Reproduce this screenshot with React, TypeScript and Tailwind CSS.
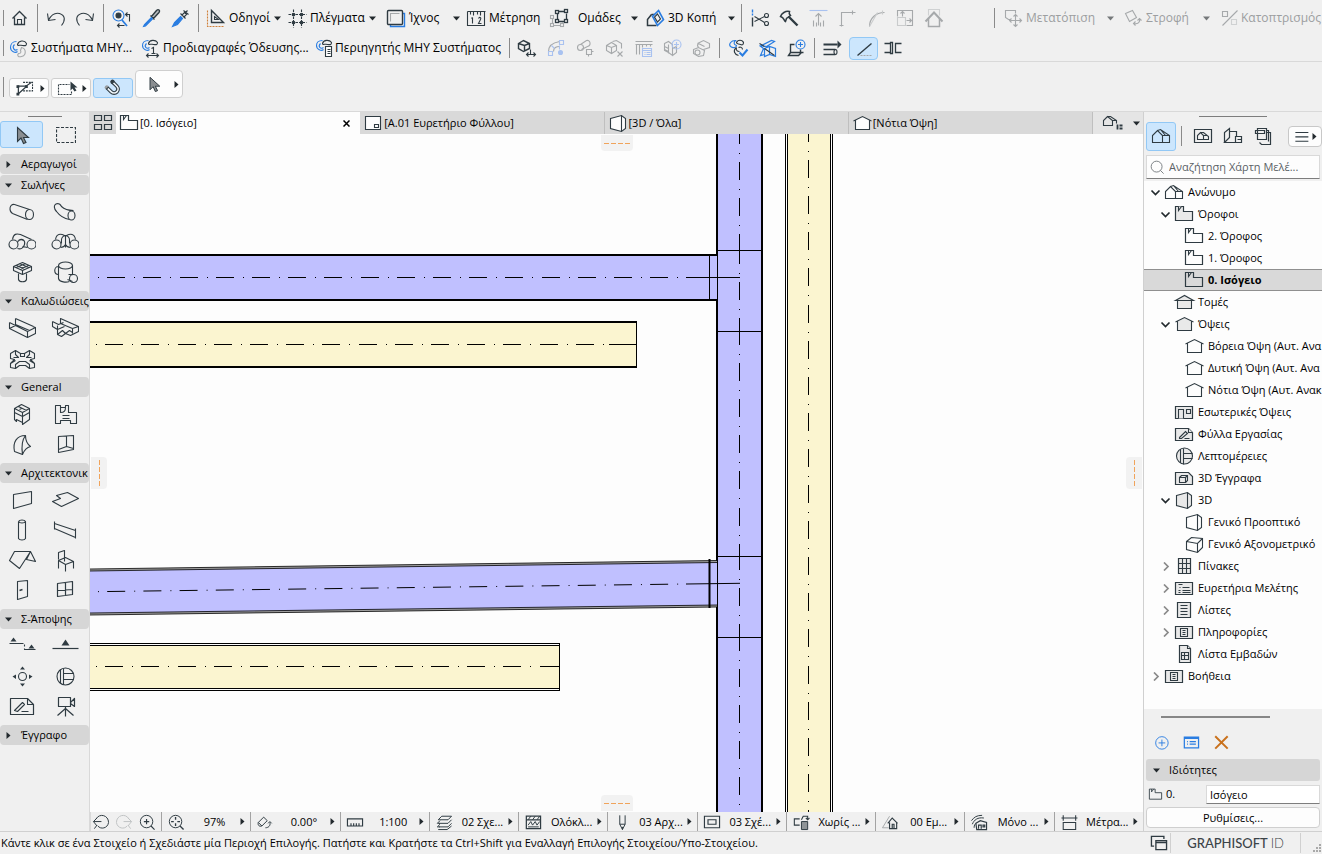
import React, { useState } from 'react';

const DARK = '#2f3b42';
const BLUE = '#2a7de1';
const PALE = '#a9c2f0';
const GRAY = '#a6a9ab';

interface IconProps {
  name: string;
  w?: number;
  h?: number;
  fill?: string;
  color?: string;
}

// Every drawing is made on an 18x18 board, the palette tools on a 28x24 one
const art: Record<string, React.ReactNode> = {
  home: <><path d="M2 9l7-7 7 7M4 8v7h10V8" strokeWidth="1.300" /><path d="M7 15v-5h4v5" /></>,
  undo: <path d="M0 4l1 7 7-1M1 10.500C4 5 8 3 12 4c6 2 6 7 2 12" />,
  redo: <path d="M17 4l-1 7-7-1M16 10.500C13 5 9 3 5 4c-6 2-6 7-2 12" />,
  findSelect: <>
    <g stroke={BLUE}><circle cx="5" cy="6" r="5.500" /><path d="M8.500 10.500l5 6" strokeWidth="1.800" /></g>
    <circle cx="5" cy="6" r="2.500" fill={DARK} /><path d="M12 5h4v7M14 3l-2 2 2 2M4 16h7M6 14l-2 2 2 2" />
  </>,
  eyedropper: <><path d="M8 6l4 4M9 7l5-6c2-2 4 0 2.500 2L11 9" fill="#b5babd" strokeWidth="1.400" /><path d="M9 8L2 15l-1 2 2-.5L10 9.500z" fill={BLUE} stroke={BLUE} /></>,
  syringe: <><path d="M9 4l5 5M14 3l2-2M12 1l5 4M10 6l3-3 2 2-3 3" /><path d="M9 7l2 2-5 6-5 2 2-4z" fill={BLUE} stroke={BLUE} /></>,
  guides: <><path d="M4 1v12h12z" strokeWidth="1.400" /><path d="M7 7v3h4z" /><path d="M0 1v16h17" stroke="#d0803a" strokeDasharray="2 1" /></>,
  grid: <><path d="M5 0v18M13 0v18M0 5h18M0 13h18" strokeDasharray="2.500 1" /><g fill={DARK}><circle cx="5" cy="5" r="1.300" /><circle cx="13" cy="5" r="1.300" /><circle cx="5" cy="13" r="1.300" /><circle cx="13" cy="13" r="1.300" /></g></>,
  trace: <><path d="M3 15v2h14V4h-2" stroke={BLUE} strokeWidth="1.400" /><rect x="0" y="1" width="15" height="14" rx="1" strokeWidth="1.400" /><path d="M3 12V4h9" stroke={GRAY} /></>,
  ruler12: <><path d="M0 2v14h17V2M0 2h18M3 2v3M6 2v4M10 2v3M13 2v4M5 8v6M4 9l1-1M11 9c1-2 3-1 2 1l-2 4h3" /></>,
  groups: <><g stroke={GRAY}><rect x="0" y="6" width="3" height="3" /><rect x="0" y="14" width="3" height="3" /><rect x="10" y="14" width="3" height="3" /><path d="M2 9v5M3 16h7M12 13v1" /></g><path d="M7 4v6M8 2h6M16 4v6M8 12h6" strokeWidth="1.300" /><g strokeWidth="1.300"><rect x="5" y="1" width="3" height="3" /><rect x="14" y="0" width="3" height="3" /><rect x="5" y="10" width="3" height="3" /><rect x="14" y="10" width="3" height="3" /></g></>,
  cut3d: <><path d="M5 5l-4 5v6h9M5 5h3" strokeWidth="1.500" /><path d="M12 1l5 9-6 6-5-9z" stroke={BLUE} strokeWidth="1.600" /><path d="M11 4.500l3 5-3 3-3-5z" /></>,
  scissors: <><path d="M1 0v6" stroke={BLUE} strokeDasharray="3 1" strokeWidth="1.400" /><path d="M1 8v9" strokeWidth="1.400" /><path d="M3 7l10 6M3 12l10-5" /><circle cx="15" cy="6" r="2" /><circle cx="15" cy="14" r="2" /></>,
  axe: <><path d="M0 7c1-3 5-6 9-5-1 2 0 3 1 4l-4 3-1 3c-2-1-1-4-5-5z" fill="#f0f0f0" strokeWidth="1.500" /><path d="M8 7l9 9" strokeWidth="2.400" /></>,
  raise: <><path d="M0 1h18" stroke={PALE} /><path d="M9 16V4M6 7l3-3 3 3M4 11v6M7 13v4M11 13v4M14 11v6" stroke={GRAY} /></>,
  corner: <path d="M3 17V3h14M1 16h4M14 1v4" stroke={GRAY} />,
  fillet: <><path d="M2 17C2 9 8 3 17 3" stroke={GRAY} /><path d="M2 17l8-14M15 1v4" stroke="#c9cbcc" /></>,
  resize: <><path d="M1 7V1h15v15h-6" stroke={GRAY} /><path d="M1 8h8v8H1z" stroke="#c9cbcc" /><path d="M6 7V2M4 4l2-2 2 2M10 11h5M13 9l2 2-2 2" stroke={GRAY} /></>,
  roof: <><path d="M3 6V0h11v6" stroke="#cfd1d2" /><path d="M0 12l8.500-9 8.500 9" stroke={GRAY} strokeWidth="2" /><path d="M3 9v8h11V9" stroke={GRAY} strokeWidth="1.500" /></>,
  move: <g stroke={GRAY}><path d="M5 10H3l-3-2V1h10v3" /><path d="M10 5v12M4 11h12M8 7l2-2 2 2M8 15l2 2 2-2M6 9l-2 2 2 2M14 9l2 2-2 2" /></g>,
  rotate: <g stroke={GRAY}><path d="M0 4l7-3 4 7-7 4z" /><path d="M8 14c4 1 7-1 6-5M12 11l2-2 2 2M10 12l-2 2 2 2" /></g>,
  mirror: <g stroke={GRAY}><path d="M16 1L1 16" /><path d="M1 2h5v5H1z" /><path d="M10 10h5v5h-5z" stroke="#cfd1d2" /></g>,
  mep: <><path d="M7 2C3 2 1 5 1 8c0 4 5 6 7 4M5 5c-3 3 0 7 3 5" stroke={BLUE} /><path d="M8 5c1-4 7-5 9-1 0 3-2 2-4 2-2-1-5 1-5-1z" /><path d="M12 8c5 1 5 8 0 9-3 1-5-1-3-3 2 0 3-1 2-3z" stroke={GRAY} /></>,
  mepOne: <><path d="M7 1C3 1 1 3 1 6c0 4 5 6 7 4M5 4c-3 3 0 6 3 4" stroke={BLUE} /><path d="M7 4c1-4 7-4 9-1 0 3-2 2-4 2-2-1-5 1-5-1z" /><path d="M10 9l2-1v6M10 14h4M5 16h12M7 14l-2 2 2 2M15 14l2 2-2 2" /></>,
  mepList: <><path d="M7 1C3 1 1 3 1 6c0 4 5 6 7 4M5 4c-3 3 0 6 3 4" stroke={BLUE} /><path d="M7 4c1-4 7-4 9-1 0 3-2 2-4 2-2-1-5 1-5-1z" /><path d="M10 7h6v10h-6zM12 10h3M12 12h3M12 14h3" fill="#fff" /></>,
  cubeOne: <><path d="M0 4l5-3 6 3v5l-6 3-5-3zM0 4l6 2 5-2M6 6v6" strokeWidth="1.400" /><path d="M8 15h9M10 13l-2 2 2 2M15 13l2 2-2 2M12 10v5" /></>,
  pipeEdit: <><path d="M1 12C1 5 6 3 12 2M6 12c0-4 3-5 6-5" stroke={GRAY} /><g stroke={PALE}><path d="M1 12h4v4H1zM12 1h4v4h-4zM4 6l3 3M12 6v4" /><circle cx="13" cy="13" r="2" fill={PALE} /></g></>,
  pipeNode: <g stroke={GRAY}><path d="M4 5l6-4c4-1 5 5 1 6l-6 3" /><ellipse cx="4" cy="8" rx="3" ry="3" /><path d="M10 10h5v5h-5zM12 15v2M15 12h2" /></g>,
  cubeX: <g stroke={GRAY}><path d="M1 6l5-3 5 3v5l-5 3-5-3zM1 6l5 2 5-2M6 8v6M7 2l4-1 5 3v5M12 12l5 5M17 12l-5 5" /></g>,
  railList: <><path d="M1 2h17M1 5h17M2 5v10M5 5v10M8 5v3M12 5v2M16 5v2" stroke={GRAY} /><path d="M8 9h9v8H8zM8 11h9M10 13h1M12 13h4M10 15h1M12 15h4" stroke={PALE} /></>,
  wallPlus: <><path d="M1 4l4-2 4 3v11l-4-3-4-2zM1 7l4 2M1 10l4 2M5 5v9M9 9l4-2v6l-4 3" stroke={GRAY} /><g stroke={PALE}><circle cx="13" cy="5" r="4.500" /><path d="M13 2.500v5M10.500 5h5" /></g></>,
  pipes: <g stroke={GRAY}><path d="M5 4l6-3 6 3v4l-6 2M6 4l6 3M1 10l5-2 6 3-1 5-5 1-5-3z" /><circle cx="5" cy="13" r="2.500" /><path d="M6 4c-2 2 0 4 0 4" /></g>,
  mepCheck: <><path d="M6 1C1 1-1 5 1 7c3 2 6 1 6-1-3-1-3-3-1-5z" stroke={BLUE} /><path d="M7 3c1-3 6-3 7 0 0 2-1 3-3 2s-4 0-4-2zM7 8c-4 3-2 7 2 8M7 8c-1 3 1 4 3 4M9 8c2-1 4 0 4 2" /><path d="M10 13l3 3 5-6" stroke={BLUE} strokeWidth="2" /></>,
  routing: <g stroke={BLUE}><path d="M3 6l10-5 3 1-8 5zM6 9l5-2 6 2v8l-6-2-5 2zM11 7v8M1 6l4 3-3 7 4-1" strokeWidth="1.200" /><path d="M1 4l5 3M6 9l10 7" stroke={DARK} /></g>,
  slabPlus: <><path d="M7 5H3v8h10v-3M3 13l-2 3h10l3-3h2M13 10v3" strokeWidth="1.400" /><g stroke={BLUE}><circle cx="13" cy="5" r="4.500" fill="#f0f0f0" /><path d="M13 2.500v5M10.500 5h5" /></g></>,
  flow: <><path d="M0 5h14" strokeWidth="2" /><path d="M14 1l4 4-4 4z" fill={DARK} stroke="none" /><path d="M0 10h12M0 15h12" strokeWidth="1.400" /><ellipse cx="12" cy="12.500" rx="1.500" ry="2.500" /></>,
  slope: <><path d="M2 16L16 4" strokeWidth="1.400" /><path d="M5 16h12" stroke={GRAY} strokeDasharray="2 1" /></>,
  clash: <path d="M0 4h6v9H0M6 3h2v11H6zM17 4h-6v9h6" strokeWidth="1.300" />,
  poly: <><path d="M1 6h9l6-4M2 14V6M2 14l8-7" strokeWidth="1.300" /><path d="M7 2h10v9H7" strokeDasharray="2 1" /><path d="M0 5h3v3H0zM0 13h3v3H0zM9 5h3v3H9z" fill={DARK} stroke="none" /></>,
  marqueeCursor: <><path d="M13 12v3H0V5h11" strokeDasharray="2 1" /><path d="M12 2v9l2-2 2 3 2-1-2-3h3z" fill={DARK} stroke="none" /></>,
  magnet: <g transform="rotate(-45 9 9)"><circle cx="4.500" cy="3" r="2.500" fill="#9a9ea1" stroke="none" /><circle cx="13.500" cy="3" r="2.500" fill={DARK} stroke="none" /><path d="M3 4v6a6 6 0 0 0 12 0V4h-3v6a3 3 0 0 1-6 0V4z" fill="#f3f8fc" strokeWidth="1.200" /></g>,
  cursor: <path d="M4 1v14l3.500-3.500L10 17l2.500-1-2.500-5h5z" fill="#8a8e91" />,
  quad: <path d="M0 1h7v5H0zM10 1h7v5h-7zM0 10h7v5H0zM10 10h7v5h-7z" strokeWidth="1.200" />,
  floor: <><path d="M0 1h8v5h9v9H0z" strokeWidth="1.200" /><path d="M3 1v4l3-4" /></>,
  layout: <><path d="M1 2h15v13H1z" /><path d="M10 10h4v3h-4z" fill="#fff" /></>,
  box3d: <><path d="M1 4l11-3 4 3v10l-4 3-11-3z" /><path d="M12 1v16" /></>,
  axono: <path d="M1 6l5-4 11 1v9l-5 5-11-3zM1 6l11 2 5-5M12 8v9" />,
  elevation: <><path d="M2 6.500V15h14V6.500L9 2z" stroke="none" /><path d="M2 6v9h14V6M0 6.500L9 2l9 4.500" /></>,
  section: <path d="M2 7v8h14V7zM0 7l9-5 9 5z" />,
  project: <><path d="M0 15V8l5-5 5 5v7z" /><path d="M5 3l3-1 9 6v7H10M10 8l7 0M8 2l5 6" /></>,
  interior: <><path d="M0 3h17v12H0z" strokeWidth="1.200" /><path d="M3 15V6h5v9M11 6h4v4h-4z" /></>,
  worksheet: <><path d="M0 3h13l4 4v8H0z" strokeWidth="1.200" /><path d="M13 3v4h4M4 12l6-6 2 2-6 5-2 0zM9 13h5" /></>,
  detail: <><circle cx="9" cy="8.500" r="8" /><path d="M5 1.500v14M8 1v16M8 6h9M8 11h9" /></>,
  doc3d: <><path d="M0 3h13l4 4v8H0z" strokeWidth="1.200" /><path d="M4 8h6v5H4zM4 8l2-2h6v5l-2 2M10 8l2-2" /></>,
  table: <><path d="M3 1h12v15H3z" strokeWidth="1.200" /><path d="M3 6h12M3 11h12M7 1v15M11 1v15" /></>,
  index: <><path d="M0 3h17v12H0z" strokeWidth="1.200" /><path d="M3 5h4M7 8h7M4 8h1M3 11h2M3 13h2M7 11h8M7 13h8" /></>,
  list: <><path d="M2 1h13v15H2z" strokeWidth="1.200" /><path d="M5 4h7M5 7h7M5 10h7M5 13h7" /></>,
  info: <><path d="M0 3h17v12H0z" strokeWidth="1.200" /><path d="M5 5h7v8H5zM7 7h3M7 9h3M7 11h3" /></>,
  areaList: <><path d="M4 0h8l3 3v14H4z" strokeWidth="1.200" /><path d="M12 0v3h3M6 7h7v7H6zM6 10h7M9 7v7" /></>,
  viewMap: <><path d="M0 2h17v13H0z" strokeWidth="1.200" /><path d="M3 12V8l3-3 3 3v4zM6 5h3l5 4v3H9M9 8h4" /></>,
  layoutBook: <path d="M0 15V5l5-4v9l-5 5h11M5 4h7v5M11 9h6v6h-6zM13 12h4" strokeWidth="1.200" />,
  publisher: <><path d="M5 3h9v11M7 5h9v12H7l-2-2" strokeWidth="1.200" /><path d="M3 1h9v11H3zM1 3h9v3H1z" fill="#f0f0f0" strokeWidth="1.200" /></>,
  menu: <path d="M0 3h18M0 9h18M0 15h18" strokeWidth="1.500" />,
  search: <><circle cx="8" cy="8" r="7" stroke="#6b7074" /><path d="M13 13l4 4" stroke="#6b7074" /></>,
  plus: <g stroke={BLUE}><circle cx="9" cy="9" r="7.500" /><path d="M9 5v8M5 9h8" /></g>,
  settings: <g stroke={BLUE} strokeWidth="1.400"><path d="M1 3h16v12H1zM1 4.500h16M4 8h1M7 8h7M4 11h1M7 11h7" /></g>,
  cross: <path d="M2 2l14 14M16 2L2 16" stroke="#c9711c" strokeWidth="2.200" />,
  zoomBack: <path d="M3 5c4-7 14-4 14 4-1 7-9 8-12 4M0 8h9M4 4L0 8l4 5M4 12l-3 4" />,
  zoomFwd: <path d="M14 5C10-2 0 1 0 9c1 7 9 8 12 4M17 8H8M13 4l4 4-4 5M13 12l3 4" stroke="#c0c3c4" />,
  zoomIn: <><circle cx="8" cy="8" r="7" /><path d="M8 5v6M5 8h6M13 13l4 4" strokeWidth="1.300" /></>,
  zoomFit: <><circle cx="8" cy="8" r="7" /><path d="M8 3v3M8 10v3M3 8h3M10 8h3M13 13l4 4" strokeWidth="1.500" /></>,
  angle: <><path d="M1 9l6-6 4 4-6 6zM5 13c-3 1-5-1-4-4" /><path d="M9 15c3 0 6-2 5-6M12 10l2-2 2 2" /></>,
  scale: <path d="M0 5h17v8H0zM4 13v-3M7 13v-3M10 13v-3M13 13v-3" strokeWidth="1.300" />,
  layers: <path d="M2 6l4-4h11l-4 4zM3 10h10l4-4M3 14h10l4-4M2 17h10l5-4M4 7l-3 3h3M4 11l-3 3h3" />,
  partial: <><path d="M1 2h16v14H1zM1 6h16" strokeWidth="1.400" /><path d="M3 6l3-4M8 6l3-4M13 6l3-4M3 12l3-4 2 4 3-4 2 4 3-4M3 14h12" /></>,
  pen: <path d="M6 1v10l3 6 3-6V1M6 11h6M9 14v3" />,
  model: <path d="M0 2h17v13H0zM4 6h9v5H4z" strokeWidth="1.300" />,
  override: <><path d="M7 12H1V5h6M9 6l2-4h5v4M14 4l2 2 2-2" strokeWidth="1.200" /><path d="M9 8h7v9H9z" fill="#8f9497" /></>,
  renovation: <><path d="M8 2L0 15h7" stroke={GRAY} /><path d="M6 10l5-6 6 6M8 9v7h8V9M11 16v-5h2v5" strokeWidth="1.300" /></>,
  structure: <><path d="M0 7c3-4 6-6 12-6M1 11c2-5 6-8 13-7M3 15c0-3 1-4 2-5" /><path d="M5 10l5-3 7 2v8H6zM8 16v-4h3v4M13 12h2v2h-2z" strokeWidth="1.300" /></>,
  dim: <path d="M0 4h18M2 1v6M16 1v6M2 9h14v8H2z" strokeWidth="1.200" />,
  windows: <path d="M5 6h12v10H5zM5 8h12M3 12H0V1h14v3" strokeWidth="1.500" />,
  homeView: <><path d="M0 11V6l4-4 5 4v5zM4 2h3l6 4v3M9 6h4" /><path d="M14 10v5M16 11h3M16 14h3" strokeWidth="1.800" /></>,
};

const tools: Record<string, React.ReactNode> = {
  pipe: <><path d="M6 4l15 5M4 13l15 6M6 4C1 3 0 10 4 13" /><ellipse cx="21" cy="14" rx="4" ry="5" /></>,
  flexPipe: <><path d="M6 3C1 4 3 9 5 11c3 4 7 7 13 8M6 3c2 0 3 1 4 3 3 3 6 4 12 4" /><ellipse cx="20" cy="15" rx="3.500" ry="4.500" /></>,
  bend: <><circle cx="5" cy="14" r="4.500" /><circle cx="23" cy="14" r="4.500" /><path d="M4 9C5 3 8 3 12 4l11 5M10 10c4-3 7 0 6 4s-4 5-7 4M14 16l5 1M9 12c0-2 4-4 6-2" /></>,
  tee: <><circle cx="5" cy="14" r="4.500" /><circle cx="23" cy="14" r="4.500" /><path d="M4 9C5 3 9 3 13 5h2c4-2 8-2 9 4M14 5v12M14 5c-5 1-4 5-4 8M14 5c5 1 4 5 4 8M9 17c3 0 4-1 5-3 1 2 2 3 5 3" /></>,
  terminal: <><path d="M5 6l9-4 9 4v4l-9 4-9-4zM5 6l9 4 9-4M14 10v4M8 5l9 4M11 3l9 4M8 7l9-4M11 9l9-4" /><path d="M10 13v6c1 3 7 3 8 0v-6" /></>,
  equipment: <><ellipse cx="14" cy="5" rx="7" ry="3.500" /><path d="M7 5v13c1 4 8 4 11 3M21 5v9M7 6c-5 0-5 8 0 8M17 14l5 0M16 19l5 2" /><circle cx="22" cy="18" r="4" /></>,
  tray: <path d="M1 6v6l18 9 8-4v-6l-3-1M1 6l18 9v6M19 15l8-4M7 2v6l14 6M7 2l18 8M1 12l6-3" />,
  trayTee: <path d="M1 5v5l5 3v5l4 2 4-3 5 2 8-4v-5L9 2v5l12 5 6-2M1 5l6 3 5-2M6 9v4l7-3M21 12v5M6 18l5-4 3 3 4-3 3 2" />,
  trayCross: <path d="M2 7l5-3 5 3h4l5-3 5 3v5l-4 1 4 4v4l-5 1-4-3h-6l-4 3-5-1v-4l4-4-4-1zM7 4v4l3 3-5 0M21 4v4l-3 3h5M2 17l5-3M26 17l-5-3M7 22v-4l4-3h6l4 3v4M12 7v3h4V7" />,
  object: <path d="M6 6l7-4 8 4v11l-7 5v-2l-6-3v2l-2-2zM6 6l8 4 7-4M14 10v11M6 10l8 4 7-4M10 4l8 4M11 7l2-1" />,
  zone: <><path d="M4 3h5v2h5V3h3v7h8v11h-6v-3H9v3H4z" /><path d="M9 5v5c4 0 5-2 5-5M11 13h7M11 16h7" /></>,
  shell: <path d="M6 19C4 10 8 3 17 3c0 5 1 8 5 11-4 1-6 3-8 8zM17 3c-4 5-4 12-3 19" />,
  opening: <path d="M7 4l15-1v14L7 20zM15 4v10M7 17l8-3 7 2" />,
  wall: <path d="M5 6l18-3v12L5 20z" />,
  slab: <path d="M1 13l8-3-4-3 11-3 11 6-17 8z" />,
  column: <><path d="M10 3v17c1 2 6 2 7 0V3" /><path d="M10 3c1 2 6 2 7 0-1-2-6-2-7 0" /></>,
  beam: <path d="M3 5l21 7v7L3 10zM3 3v8M24 10v10" />,
  roofTool: <path d="M1 12L6 3h16L11 20zM22 3l5 10-9-2z" />,
  chair: <path d="M7 11V4l6-2v11M7 12l7-3 8 4-8 3zM7 12v8M22 13v7M14 16v7" />,
  door: <><path d="M9 3l10-1v16L9 21z" /><path d="M11 12l3-1" strokeWidth="1.500" /></>,
  window: <path d="M6 5l15-2v13L6 18zM14 4v13M6 12l15-1" strokeWidth="1.200" />,
  sectionTool: <><path d="M1 9h15v6h11" strokeDasharray="14 2 2 2" /><path d="M5 3l3 4H2zM23 10l3 4h-6z" fill={DARK} stroke="none" /></>,
  elevationTool: <><path d="M1 14h26" strokeWidth="1.200" /><path d="M14 5l4 6h-8z" fill={DARK} stroke="none" /></>,
  interiorTool: <><circle cx="14" cy="12" r="4" /><path d="M14 2l2.500 3h-5zM14 22l2.500-3h-5zM4 12l3.500-2v4.500zM24 12l-3.500-2v4.500z" fill={DARK} stroke="none" /></>,
  detailTool: <><circle cx="14" cy="12" r="8.500" /><path d="M9 5v14M12 4v16M12 9h10M12 15h10" /></>,
  worksheetTool: <><path d="M2 4h17l6 6v10H2z" strokeWidth="1.200" /><path d="M19 4v6h6M6 16l8-8 2 2-7 7-3-1zM13 17h7" /></>,
  camera: <path d="M7 3h12v9H7zM19 8l4-4v8l-4-3M14 12v10M14 14l-8 7M14 14l8 7" strokeWidth="1.200" />,
};

const Icon: React.FC<IconProps> = ({ name, w = 18, h = 18, fill = 'none', color = DARK }) => (
  <svg width={w} height={h} viewBox="-.5 -.5 18 18" fill={fill} stroke={color} strokeWidth="1.1" className="shrink-0 overflow-visible" aria-hidden="true">
    {art[name]}
  </svg>
);

const Arrow: React.FC<{ dir?: 'down' | 'right'; dim?: boolean }> = ({ dir = 'down', dim }) => (
  <svg width="7" height="7" viewBox="0 0 7 7" fill={dim ? '#75787a' : '#22292d'} className="shrink-0" aria-hidden="true">
    <path d={dir === 'down' ? 'M0 1.500h7L3.500 5.500z' : 'M1.500 0v7l4-3.500z'} />
  </svg>
);

const Gripper = () => <span className="ml-[3px] h-4 w-px shrink-0 bg-[#8a8a8a]" />;
const Separator: React.FC<{ tall?: boolean; space?: string }> = ({ tall, space = '' }) => (
  <span className={`w-px shrink-0 bg-[#8a8a8a] ${tall ? 'h-7' : 'h-5'} ${space}`} />
);

const IconButton: React.FC<{ name: string; label: string; active?: boolean }> = ({ name, label, active }) => (
  <button
    type="button"
    aria-label={label}
    className={`flex h-[23px] w-[29px] shrink-0 items-center justify-center rounded-sm ${active ? 'border border-[#92c8f5] bg-[#cce6fd]' : ''}`}
  >
    <Icon name={name} />
  </button>
);

const MenuButton: React.FC<{ name: string; text: string; width?: string; menu?: boolean; dim?: boolean; gap?: string }> = ({ name, text, width = '', menu = true, dim, gap = 'gap-1' }) => (
  <button type="button" className={`flex h-6 shrink-0 items-center pr-[3px] pl-1 ${gap} ${width} ${dim ? 'text-[#9c9ea0]' : ''}`}>
    <Icon name={name} />
    <span className="whitespace-nowrap">{text}</span>
    {menu && <span className="ml-auto"><Arrow dim={dim} /></span>}
  </button>
);

interface Group {
  title: string;
  open: boolean;
  items: string[];
}

const toolGroups: Group[] = [
  { title: 'Αεραγωγοί', open: false, items: [] },
  { title: 'Σωλήνες', open: true, items: ['pipe', 'flexPipe', 'bend', 'tee', 'terminal', 'equipment'] },
  { title: 'Καλωδιώσεις', open: true, items: ['tray', 'trayTee', 'trayCross'] },
  { title: 'General', open: true, items: ['object', 'zone', 'shell', 'opening'] },
  { title: 'Αρχιτεκτονικ', open: true, items: ['wall', 'slab', 'column', 'beam', 'roofTool', 'chair', 'door', 'window'] },
  { title: 'Σ-Άποψης', open: true, items: ['sectionTool', 'elevationTool', 'interiorTool', 'detailTool', 'worksheetTool', 'camera'] },
  { title: 'Έγγραφο', open: false, items: [] },
];

interface TreeRow {
  text: string;
  icon: string;
  level: number;
  state?: 'open' | 'closed';
}

const treeRows: TreeRow[] = [
  { text: 'Ανώνυμο', icon: 'project', level: 0, state: 'open' },
  { text: 'Όροφοι', icon: 'floor', level: 1, state: 'open' },
  { text: '2. Όροφος', icon: 'floor', level: 2 },
  { text: '1. Όροφος', icon: 'floor', level: 2 },
  { text: '0. Ισόγειο', icon: 'floor', level: 2 },
  { text: 'Τομές', icon: 'section', level: 1 },
  { text: 'Όψεις', icon: 'elevation', level: 1, state: 'open' },
  { text: 'Βόρεια Όψη (Αυτ. Ανα', icon: 'elevation', level: 2 },
  { text: 'Δυτική Όψη (Αυτ. Ανα', icon: 'elevation', level: 2 },
  { text: 'Νότια Όψη (Αυτ. Ανακ', icon: 'elevation', level: 2 },
  { text: 'Εσωτερικές Όψεις', icon: 'interior', level: 1 },
  { text: 'Φύλλα Εργασίας', icon: 'worksheet', level: 1 },
  { text: 'Λεπτομέρειες', icon: 'detail', level: 1 },
  { text: '3D Έγγραφα', icon: 'doc3d', level: 1 },
  { text: '3D', icon: 'box3d', level: 1, state: 'open' },
  { text: 'Γενικό Προοπτικό', icon: 'box3d', level: 2 },
  { text: 'Γενικό Αξονομετρικό', icon: 'axono', level: 2 },
  { text: 'Πίνακες', icon: 'table', level: 1, state: 'closed' },
  { text: 'Ευρετήρια Μελέτης', icon: 'index', level: 1, state: 'closed' },
  { text: 'Λίστες', icon: 'list', level: 1, state: 'closed' },
  { text: 'Πληροφορίες', icon: 'info', level: 1, state: 'closed' },
  { text: 'Λίστα Εμβαδών', icon: 'areaList', level: 1 },
  { text: 'Βοήθεια', icon: 'info', level: 0, state: 'closed' },
];

const indent = ['pl-[6px]', 'pl-[16px]', 'pl-[26px]'];

const tabs = [
  { text: '[0. Ισόγειο]', icon: 'floor' },
  { text: '[A.01 Ευρετήριο Φύλλου]', icon: 'layout' },
  { text: '[3D / Όλα]', icon: 'box3d' },
  { text: '[Νότια Όψη]', icon: 'elevation' },
];

const quickOptions = [
  { text: '97%', icon: 'zoomFit' },
  { text: '0.00°', icon: 'angle' },
  { text: '1:100', icon: 'scale' },
  { text: '02 Σχε...', icon: 'layers' },
  { text: 'Ολόκλ...', icon: 'partial' },
  { text: '03 Αρχ...', icon: 'pen' },
  { text: '03 Σχέ...', icon: 'model' },
  { text: 'Χωρίς ...', icon: 'override' },
  { text: '00 Εμ...', icon: 'renovation' },
  { text: 'Μόνο ...', icon: 'structure' },
  { text: 'Μέτρα...', icon: 'dim' },
];

const Header = () => (
  <header className="text-[12px]">
    <div className="flex h-9 items-center">
      <Gripper />
      <IconButton name="home" label="Αρχική" />
      <Separator tall space="mr-[3px] ml-1" />
      <IconButton name="undo" label="Αναίρεση" />
      <IconButton name="redo" label="Επανάληψη" />
      <Separator tall space="mr-[3px] ml-1" />
      <IconButton name="findSelect" label="Εύρεση" />
      <IconButton name="eyedropper" label="Λήψη παραμέτρων" />
      <IconButton name="syringe" label="Μεταφορά παραμέτρων" />
      <Separator tall space="mx-1" />
      <MenuButton name="guides" text="Οδηγοί" width="w-[81px]" />
      <MenuButton name="grid" text="Πλέγματα" width="mr-1 w-[95px]" />
      <MenuButton name="trace" text="Ίχνος" width="w-[80px]" />
      <MenuButton name="ruler12" text="Μέτρηση" width="w-[83px]" menu={false} />
      <MenuButton name="groups" text="Ομάδες" width="mr-1 w-[92px]" gap="gap-[10px]" />
      <MenuButton name="cut3d" text="3D Κοπή" width="w-[96px]" />
      <Separator tall space="mx-[3px]" />
      <IconButton name="scissors" label="Κοπή" />
      <IconButton name="axe" label="Διαίρεση" />
      <IconButton name="raise" label="Προσαρμογή" />
      <IconButton name="corner" label="Τομή" />
      <IconButton name="fillet" label="Καμπύλωση" />
      <IconButton name="resize" label="Αλλαγή μεγέθους" />
      <IconButton name="roof" label="Στέγη" />
      <Separator space="mr-[6px] ml-[46px]" />
      <MenuButton name="move" text="Μετατόπιση" width="mr-1 w-[116px]" gap="gap-[3px]" dim />
      <MenuButton name="rotate" text="Στροφή" width="mr-1 w-[92px]" gap="gap-[3px]" dim />
      <MenuButton name="mirror" text="Κατοπτρισμός" gap="gap-[2px]" menu={false} dim />
    </div>
    <div className="flex h-[26px] items-center border-b border-[#d9d9d9] pb-px">
      <Gripper />
      <MenuButton name="mep" text="Συστήματα ΜΗΥ..." width="ml-px w-[132px]" menu={false} />
      <MenuButton name="mepOne" text="Προδιαγραφές Όδευσης..." width="w-[174px]" menu={false} />
      <MenuButton name="mepList" text="Περιηγητής ΜΗΥ Συστήματος" width="w-[194px]" gap="gap-[2px]" menu={false} />
      <Separator space="mr-[2px] ml-1" />
      <IconButton name="cubeOne" label="Μετατροπή" />
      <IconButton name="pipeEdit" label="Επεξεργασία όδευσης" />
      <IconButton name="pipeNode" label="Κόμβος" />
      <IconButton name="cubeX" label="Διαγραφή εξαρτήματος" />
      <IconButton name="railList" label="Λίστα" />
      <IconButton name="wallPlus" label="Προσθήκη" />
      <IconButton name="pipes" label="Σωλήνες" />
      <Separator space="mr-[3px] ml-1" />
      <IconButton name="mepCheck" label="Έλεγχος" />
      <IconButton name="routing" label="Όδευση" />
      <IconButton name="slabPlus" label="Άνοιγμα" />
      <Separator space="mr-[2px] ml-1" />
      <span className="mr-[3px]"><IconButton name="flow" label="Ροή" /></span>
      <IconButton name="slope" label="Κλίση" active />
      <IconButton name="clash" label="Σύνδεση" />
    </div>
    <div className="flex h-[49px] items-end gap-[2px] pb-[13px]">
      <span className="mr-[3px] mb-px ml-[3px] h-5 w-px bg-[#8a8a8a]" />
      <button type="button" aria-label="Μέθοδος" className="flex h-5 w-10 items-center justify-between rounded-[3px] border border-[#cfcfcf] bg-[#fdfdfd] pr-[2px] pl-[6px]">
        <Icon name="poly" w={17} h={17} /><Arrow dir="right" />
      </button>
      <button type="button" aria-label="Περιοχή" className="flex h-5 w-10 items-center justify-between rounded-[3px] border border-[#cfcfcf] bg-[#fdfdfd] pr-[2px] pl-[6px]">
        <Icon name="marqueeCursor" w={18} h={18} /><Arrow dir="right" />
      </button>
      <button type="button" aria-label="Μαγνήτης" className="flex h-5 w-10 items-center justify-center rounded-[3px] border border-[#92c8f5] bg-[#cce6fd]">
        <Icon name="magnet" w={16} h={16} />
      </button>
      <button type="button" aria-label="Βέλος" className="flex h-7 w-12 items-center justify-between rounded-[4px] border border-[#cfcfcf] bg-[#fdfdfd] pr-[2px] pl-[10px]">
        <Icon name="cursor" w={16} h={16} /><Arrow dir="right" />
      </button>
    </div>
  </header>
);

const ToolBox = () => (
  <aside className="w-[90px] shrink-0 overflow-hidden border-r border-[#d9d9d9]">
    <div className="flex h-[9px] items-center justify-center"><span className="h-px w-[34px] bg-[#7d7d7d]" /></div>
    <div className="mb-[6px] flex h-[27px]">
      <button type="button" aria-label="Βέλος" className="flex w-[43px] items-center justify-center rounded-[3px] border border-[#92c8f5] bg-[#cce6fd]">
        <Icon name="cursor" />
      </button>
      <button type="button" aria-label="Περιοχή επιλογής" className="flex flex-1 items-center justify-center">
        <svg width="20" height="16" viewBox="0 0 20 16" fill="none" stroke={DARK} strokeWidth="1.2" strokeDasharray="3 1.500"><rect x=".5" y=".5" width="19" height="15" /></svg>
      </button>
    </div>
    {toolGroups.map((group) => (
      <section key={group.title} className="mb-px">
        <button type="button" aria-expanded={group.open} className="flex h-5 w-[89px] items-center gap-[9px] overflow-hidden rounded-sm bg-[#d6d6d6] pl-[5px]">
          <Arrow dir={group.open ? 'down' : 'right'} />
          <span className="whitespace-nowrap">{group.title}</span>
        </button>
        {group.open && (
          <div className="grid w-[87px] grid-cols-2 pt-[2px] pb-[3px]">
            {group.items.map((item) => (
              <button key={item} type="button" aria-label={item} className="flex h-[30px] items-center justify-center">
                <svg width="28" height="24" viewBox="-.5 -.5 28 24" fill="none" stroke={DARK} strokeWidth="1.1" strokeLinejoin="round" aria-hidden="true">{tools[item]}</svg>
              </button>
            ))}
          </div>
        )}
      </section>
    ))}
  </aside>
);

// Ducts and cable trays of the storey, in plan
const Plan = () => (
  <svg className="block h-full w-full" viewBox="90 134 1053 678" preserveAspectRatio="xMinYMin slice" fill="none" stroke="#000" shapeRendering="crispEdges" role="img" aria-label="Κάτοψη">
    <g stroke="none">
      <rect x="717" y="134" width="45" height="700" fill="#c0c0ff" />
      <rect x="90" y="255" width="628" height="45" fill="#c0c0ff" />
      <path d="M90 569.500L718 561v46L90 614.500z" fill="#c0c0ff" />
      <rect x="787" y="134" width="44" height="700" fill="#fbf5d0" />
      <rect x="90" y="322" width="547" height="45" fill="#fbf5d0" />
      <rect x="90" y="645" width="470" height="44" fill="#fbf5d0" />
    </g>
    <g strokeWidth="2">
      <path d="M717 134V256M717 299V562M717 606V834M762 134V834M90 255H717M90 300H717M90 322H637M90 367H637" />
    </g>
    <path d="M717.500 256V299M709.500 256V299M717.500 562V606M717 250.500H762M717 331.500H762M717 556.500H762M717 637.500H762M636.500 321V368" />
    <path d="M785.500 134V834M787.500 134V834M830.500 134V834M832.500 134V834" />
    <path d="M90 643.500H560M90 645.500H560M90 688.500H560M90 690.500H560M559.500 643V691" />
    <g shapeRendering="auto">
      <path d="M90 570L717 561.500M90 614L717 606" stroke="#a0a0a0" strokeWidth="2" />
      <path d="M90 569L717 560.500M90 571L717 562.500M90 613L717 605M90 615L717 607" strokeWidth=".8" />
      <path d="M709.500 559V608" strokeWidth="2" />
      <path d="M71 592L686 584" strokeDasharray="18 9 1 8.200" />
      <path d="M686 584L740 583.300" />
    </g>
    <path d="M71 277.500H686" strokeDasharray="18 9 1 8.200" />
    <path d="M686 277.500H740" />
    <path d="M69 344.500H610" strokeDasharray="18 9 1 8.200" />
    <path d="M609 344.500H637M540 666.500H560" />
    <path d="M69 666.500H540" strokeDasharray="18 9 1 8.200" />
    <g strokeDasharray="18 9 1 8.100">
      <path d="M739.500 126V250M808.500 124V834" />
      <path d="M739.500 250V331M739.500 331V556M739.500 556V637M739.500 637V834" strokeDashoffset="4" />
    </g>
  </svg>
);

// Handle on the edge of the drawing where hidden palettes slide out
const EdgeGrip: React.FC<{ place: string; vertical?: boolean }> = ({ place, vertical }) => (
  <span className={`absolute flex items-center justify-center gap-[2px] bg-[#f2f2f2] ${vertical ? 'h-8 w-4 -translate-y-1/2 flex-col' : 'h-4 w-8 -translate-x-1/2'} ${place}`}>
    {[0, 1, 2, 3].map((n) => <span key={n} className={`bg-[#f0a35a] ${vertical ? 'h-[5px] w-px' : 'h-px w-[5px]'}`} />)}
  </span>
);

const Tabs: React.FC<{ current: number; onPick: (index: number) => void }> = ({ current, onPick }) => (
  <div className="flex h-[22px] shrink-0 bg-[#d9d9d9]">
    <button type="button" aria-label="Όλες οι καρτέλες" className="flex w-[26px] items-center justify-center"><Icon name="quad" /></button>
    {tabs.map((tab, i) => (
      <div key={tab.text} className={`flex flex-1 items-center border-r pr-2 ${i === current ? 'border-transparent bg-[#fdfdfd]' : 'border-[#bfbfbf]'}`}>
        <button type="button" onClick={() => onPick(i)} className="flex flex-1 items-center gap-[2px] pl-1 whitespace-nowrap">
          <Icon name={tab.icon} fill={i === current ? 'none' : '#fdfdfd'} />{tab.text}
        </button>
        {i === current && (
          <button type="button" aria-label="Κλείσιμο" className="flex size-2 items-center">
            <svg width="7" height="7" viewBox="0 0 7 7" stroke="#000" strokeWidth="1.500"><path d="M.5.5l6 6M6.500.5l-6 6" /></svg>
          </button>
        )}
      </div>
    ))}
    <button type="button" aria-label="Επιλογές προβολής" className="flex w-[50px] items-center justify-between bg-[#e5e5e5] pr-[3px] pl-[10px]"><Icon name="homeView" /><Arrow /></button>
  </div>
);

const QuickOptions = () => (
  <div className="flex h-[19px] shrink-0 items-center border-l border-[#d9d9d9]">
    <div className="flex w-[70px] items-center gap-[7px] pl-[2px]">
      <button type="button" aria-label="Προηγούμενη μεγέθυνση"><Icon name="zoomBack" w={16} h={16} /></button>
      <button type="button" aria-label="Επόμενη μεγέθυνση"><Icon name="zoomFwd" w={16} h={16} /></button>
      <button type="button" aria-label="Μεγέθυνση"><Icon name="zoomIn" w={16} h={16} /></button>
    </div>
    {quickOptions.map((option) => (
      <button key={option.text} type="button" className="flex h-[19px] min-w-0 flex-1 items-center border-l border-[#a3a3a3] pr-1 pl-[6px]">
        <Icon name={option.icon} w={16} h={16} />
        <span className="flex-1 pl-[6px] text-center whitespace-nowrap">{option.text}</span>
        <Arrow dir="right" />
      </button>
    ))}
  </div>
);

const Navigator = () => {
  const [selected, setSelected] = useState(4);

  return (
    <aside className="flex w-[179px] shrink-0 flex-col overflow-hidden border-l border-[#d0d0d0]">
      <div className="flex h-[9px] items-center justify-center"><span className="h-px w-[68px] bg-[#7d7d7d]" /></div>
      <div className="flex h-[34px] items-center pl-[2px]">
        <button type="button" aria-label="Χάρτης Μελέτης" className="mb-1 flex h-[29px] w-[30px] items-center justify-center rounded-[3px] border border-[#92c8f5] bg-[#cce6fd]"><Icon name="project" /></button>
        <div className="mb-1 flex flex-1 items-center pl-[5px]">
          <Separator space="mr-[6px]" />
          <button type="button" aria-label="Χάρτης Όψεων" className="flex w-[30px] justify-center"><Icon name="viewMap" /></button>
          <button type="button" aria-label="Τεύχος Σχεδίων" className="flex w-[30px] justify-center"><Icon name="layoutBook" /></button>
          <button type="button" aria-label="Εκδότης" className="flex w-[30px] justify-center"><Icon name="publisher" /></button>
        </div>
        <button type="button" aria-label="Επιλογές" className="mb-1 flex h-[21px] w-[34px] items-center justify-between rounded-[4px] border border-[#c8c8c8] bg-[#fdfdfd] pr-[3px] pl-[6px]"><Icon name="menu" w={13} h={13} /><Arrow dir="right" /></button>
      </div>
      <label className="mx-[2px] mb-[2px] flex h-6 items-center gap-[5px] border border-[#d9d9d9] border-b-[#7d7d7d] bg-[#fdfdfd] pl-[3px]">
        <Icon name="search" w={14} h={14} />
        <input type="text" aria-label="Αναζήτηση" placeholder="Αναζήτηση Χάρτη Μελέ..." className="min-w-0 flex-1 outline-none placeholder:text-[#5b6266]" />
      </label>
      <ul className="flex-1 bg-[#fdfdfd]">
        {treeRows.map((row, i) => (
          <li key={row.text} className={`border-y ${i === selected ? 'border-[#8f8f8f] bg-[#d9d9d9] font-bold' : 'border-transparent'}`}>
            <button type="button" onClick={() => setSelected(i)} className={`flex h-5 w-full items-center ${indent[row.level]}`}>
              <span className="flex w-[15px] shrink-0 items-center">
                {row.state && (
                  <svg width="11" height="9" viewBox="0 0 11 9" fill="none" stroke={row.state === 'open' ? '#22292d' : '#8a8a8a'} strokeWidth="1.700">
                    <path d={row.state === 'open' ? 'M1.500 2.500l4 4 4-4' : 'M4 .5l4 4-4 4'} />
                  </svg>
                )}
              </span>
              <Icon name={row.icon} fill={row.level === 2 || row.text === 'Ανώνυμο' ? 'none' : '#e9e9e9'} />
              <span className="pl-[5px] whitespace-nowrap">{row.text}</span>
            </button>
          </li>
        ))}
      </ul>
      <div className="h-[122px] px-[2px]">
        <div className="flex h-4 items-center pl-[15px]"><span className="h-[2px] w-[109px] bg-[#868686]" /></div>
        <div className="flex h-[34px] items-center gap-[14px] pl-2">
          <button type="button" aria-label="Νέο"><Icon name="plus" w={15} h={15} /></button>
          <button type="button" aria-label="Ρυθμίσεις"><Icon name="settings" w={16} h={16} /></button>
          <button type="button" aria-label="Διαγραφή"><Icon name="cross" w={16} h={16} /></button>
        </div>
        <button type="button" className="flex h-[22px] w-full items-center gap-[9px] rounded-[3px] bg-[#d6d6d6] pl-[7px]"><Arrow />Ιδιότητες</button>
        <div className="flex h-[26px] items-center">
          <label htmlFor="story" className="flex w-[60px] items-center gap-1 pl-[3px]"><Icon name="floor" w={13} h={13} />0.</label>
          <input id="story" type="text" defaultValue="Ισόγειο" className="h-[19px] min-w-0 flex-1 border border-[#d9d9d9] border-b-[#7d7d7d] bg-white px-[3px]" />
        </div>
        <button type="button" className="flex h-[21px] w-full items-center justify-center rounded-[4px] border border-[#cfcfcf] bg-[#fdfdfd]">Ρυθμίσεις...</button>
      </div>
    </aside>
  );
};

const StatusBar = () => (
  <footer className="flex h-[23px] shrink-0 items-center border-t border-[#d0d0d0] pl-px">
    <p className="flex-1 whitespace-nowrap">Κάντε κλικ σε ένα Στοιχείο ή Σχεδιάστε μία Περιοχή Επιλογής. Πατήστε και Κρατήστε τα Ctrl+Shift για Εναλλαγή Επιλογής Στοιχείου/Υπο-Στοιχείου.</p>
    <button type="button" aria-label="Παράθυρα" className="pr-[3px]"><Icon name="windows" w={16} h={16} /></button>
    <span className="h-5 w-px bg-[#d0d0d0]" />
    <a href="#id" className="px-4 font-['Lato'] text-[13px] font-medium text-[#3c4448]">GRAPHISOFT <span className="font-light">ID</span></a>
    <span className="mr-[12px] h-5 w-px bg-[#d0d0d0]" />
    <svg width="9" height="10" viewBox="0 0 9 10" fill="#a9a9a9" className="self-end" aria-hidden="true"><path d="M6 0h2v2H6zM3 3h2v2H3zM6 3h2v2H6zM0 6h2v2H0zM3 6h2v2H3zM6 6h2v2H6z" /></svg>
  </footer>
);

const App: React.FC = () => {
  const [tab, setTab] = useState(0);

  return (
    <div className="flex h-screen flex-col overflow-hidden bg-[#f0f0f0] font-['Open_Sans','Noto_Sans',sans-serif] text-[11px] leading-4 text-black select-none">
      <Header />
      <div className="flex min-h-0 flex-1 border-t border-[#d9d9d9]">
        <ToolBox />
        <main className="flex min-w-0 flex-1 flex-col">
          <Tabs current={tab} onPick={setTab} />
          <div className="relative min-h-0 flex-1 bg-[#fdfdfd]">
            <Plan />
            <EdgeGrip place="top-px left-1/2 rounded-b" />
            <EdgeGrip place="bottom-px left-1/2 rounded-t" />
            <EdgeGrip place="top-1/2 left-px rounded-r" vertical />
            <EdgeGrip place="top-1/2 right-px rounded-l" vertical />
          </div>
          <QuickOptions />
        </main>
        <Navigator />
      </div>
      <StatusBar />
    </div>
  );
};

export default App;
